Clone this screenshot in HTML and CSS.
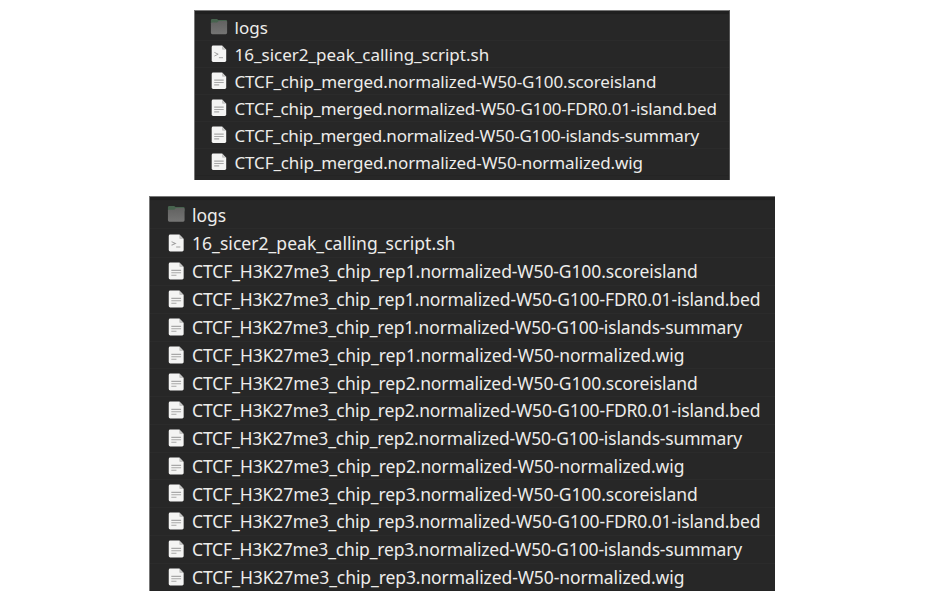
FILE: index.html
```html
<!DOCTYPE html>
<html lang="en">
<head>
<meta charset="utf-8">
<title>Peak calling output files</title>
<link rel="stylesheet" href="styles.css">
</head>
<body>
<svg class="defs" aria-hidden="true">
  <linearGradient id="fill" x1="0" y1="0" x2="0" y2="1"><stop offset="0" stop-color="#626261"/><stop offset="1" stop-color="#757574"/></linearGradient>
  <symbol id="folder" viewBox="0 0 18 18">
    <path d="M.9 5V2.2Q.9 1 2.2 1H7l1.3 1H16q1.1 0 1.1 1V6H.9z" fill="#47634e"/>
    <path d="M.9 4.9Q.9 4.5 2 4.5H7.2L8.7 3H16.1q1 0 1 1V14.8q0 1.4-1.4 1.4H2.3Q.9 16.2.9 14.8z" fill="url(#fill)"/>
  </symbol>
  <symbol id="sheet" viewBox="0 0 18 18">
    <path d="M3.1 .6H12l4.2 4.2V15.6q0 1.4-1.4 1.4H3.1Q1.7 17 1.7 15.6V2Q1.7 .6 3.1 .6z" fill="#f4f4f3"/>
    <path d="M12 .6l4.2 4.2H13q-1 0-1-1z" fill="#c4c4c3"/>
  </symbol>
  <symbol id="text" viewBox="0 0 18 18">
    <use href="#sheet"/>
    <path d="M4.2 8.1H13.7M4.2 10.5H13.7M4.2 12.9H9.2" stroke="#a8a8a8" stroke-width="1.1"/>
  </symbol>
  <symbol id="script" viewBox="0 0 18 18">
    <use href="#sheet"/>
    <path d="M4.4 7.4L8.2 9.2L4.4 11M8.9 12.7H13" fill="none" stroke="#a2a2a2" stroke-width="1"/>
  </symbol>
</svg>

<ul class="panel merged">
  <li><svg><use href="#folder"/></svg><span>logs</span></li>
  <li class="sh"><svg><use href="#script"/></svg><span>16_sicer2_peak_calling_script.sh</span></li>
  <li class="score"><svg><use href="#text"/></svg><span>CTCF_chip_merged.normalized-W50-G100.scoreisland</span></li>
  <li class="bed"><svg><use href="#text"/></svg><span>CTCF_chip_merged.normalized-W50-G100-FDR0.01-island.bed</span></li>
  <li class="summary"><svg><use href="#text"/></svg><span>CTCF_chip_merged.normalized-W50-G100-islands-summary</span></li>
  <li class="wig"><svg><use href="#text"/></svg><span>CTCF_chip_merged.normalized-W50-normalized.wig</span></li>
</ul>

<ul class="panel replicates">
  <li><svg><use href="#folder"/></svg><span>logs</span></li>
  <li class="sh"><svg><use href="#script"/></svg><span>16_sicer2_peak_calling_script.sh</span></li>
  <li class="score"><svg><use href="#text"/></svg><span>CTCF_H3K27me3_chip_rep1.normalized-W50-G100.scoreisland</span></li>
  <li class="bed"><svg><use href="#text"/></svg><span>CTCF_H3K27me3_chip_rep1.normalized-W50-G100-FDR0.01-island.bed</span></li>
  <li class="summary"><svg><use href="#text"/></svg><span>CTCF_H3K27me3_chip_rep1.normalized-W50-G100-islands-summary</span></li>
  <li class="wig"><svg><use href="#text"/></svg><span>CTCF_H3K27me3_chip_rep1.normalized-W50-normalized.wig</span></li>
  <li class="score"><svg><use href="#text"/></svg><span>CTCF_H3K27me3_chip_rep2.normalized-W50-G100.scoreisland</span></li>
  <li class="bed"><svg><use href="#text"/></svg><span>CTCF_H3K27me3_chip_rep2.normalized-W50-G100-FDR0.01-island.bed</span></li>
  <li class="summary"><svg><use href="#text"/></svg><span>CTCF_H3K27me3_chip_rep2.normalized-W50-G100-islands-summary</span></li>
  <li class="wig"><svg><use href="#text"/></svg><span>CTCF_H3K27me3_chip_rep2.normalized-W50-normalized.wig</span></li>
  <li class="score"><svg><use href="#text"/></svg><span>CTCF_H3K27me3_chip_rep3.normalized-W50-G100.scoreisland</span></li>
  <li class="bed"><svg><use href="#text"/></svg><span>CTCF_H3K27me3_chip_rep3.normalized-W50-G100-FDR0.01-island.bed</span></li>
  <li class="summary"><svg><use href="#text"/></svg><span>CTCF_H3K27me3_chip_rep3.normalized-W50-G100-islands-summary</span></li>
  <li class="wig"><svg><use href="#text"/></svg><span>CTCF_H3K27me3_chip_rep3.normalized-W50-normalized.wig</span></li>
</ul>
</body>
</html>
```
FILE: styles.css
```css
* { box-sizing: border-box; }

body {
  margin: 0;
  padding-top: 10px;
  background: #fff;
  color: #edecea;
  font-family: "Noto Sans", "Open Sans", sans-serif;
}

.defs { position: absolute; width: 0; height: 0; }

.panel {
  margin: 0;
  padding: 0;
  list-style: none;
  background: #272727;
  border: 0 solid #777;
  border-width: 1px 0 0 1px;
  box-shadow: inset 0 3px 1px #202020;
}

.panel li {
  display: flex;
  align-items: center;
  white-space: nowrap;
  border-bottom: 1px solid #2b2b2b;
}

.panel svg { flex: none; }
.panel li:last-child { border-bottom-color: #242424; }

.merged {
  width: 536px;
  height: 170px;
  margin-left: 194px;
  padding-top: 3px;
  border-right: 1px solid #555;
  font-size: 17px;
}
.merged li { height: 27px; padding-left: 15px; }
.merged svg { width: 18px; height: 18px; margin-right: 6.5px; }
.merged .sh { letter-spacing: 0px; }
.merged .score { letter-spacing: -0.13px; }
.merged .bed { letter-spacing: -0.18px; }
.merged .summary { letter-spacing: -0.21px; }
.merged .wig { letter-spacing: -0.135px; }

.replicates {
  width: 626px;
  height: 395px;
  margin: 16px 0 0 149px;
  padding-top: 4px;
  font-size: 17.5px;
}
.replicates li { height: 27.78px; padding-left: 17px; }
.replicates li:nth-child(-n+2) { height: 28.4px; }
.replicates li:nth-child(3) { height: 28.2px; }
.replicates svg { width: 18.5px; height: 18.5px; margin-right: 6.5px; }
.replicates .sh { letter-spacing: 0.04px; }
.replicates .score { letter-spacing: -0.105px; }
.replicates .bed { letter-spacing: -0.145px; }
.replicates .summary { letter-spacing: -0.17px; }
.replicates .wig { letter-spacing: -0.095px; }
```
